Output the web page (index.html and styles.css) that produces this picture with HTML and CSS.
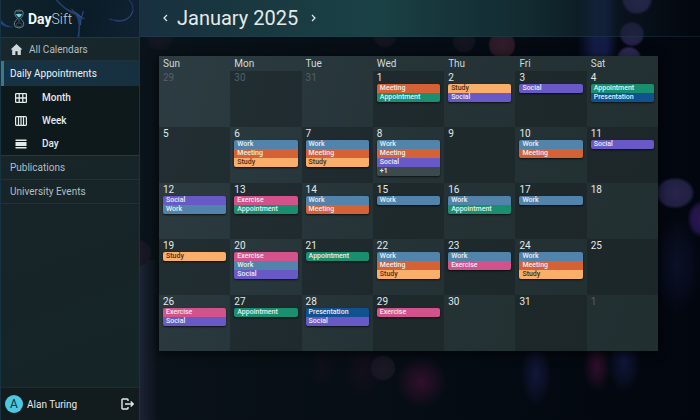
FILE: index.html
```html
<!DOCTYPE html>
<html lang="en">
<head>
<meta charset="utf-8">
<title>DaySift</title>
<link rel="stylesheet" href="styles.css">
</head>
<body>
<svg class="backdrop" viewBox="0 0 700 420" preserveAspectRatio="xMidYMid slice" aria-hidden="true">
  <defs>
    <radialGradient id="blue"><stop offset="0" stop-color="#1c2358" stop-opacity=".7"/><stop offset=".6" stop-color="#181c4c" stop-opacity=".4"/><stop offset="1" stop-color="#181c4c" stop-opacity="0"/></radialGradient>
    <radialGradient id="rose"><stop offset="0" stop-color="#3d1033" stop-opacity=".8"/><stop offset=".5" stop-color="#30102c" stop-opacity=".5"/><stop offset="1" stop-color="#28102a" stop-opacity="0"/></radialGradient>
    <radialGradient id="orb"><stop offset="0" stop-color="#332b5c"/><stop offset=".8" stop-color="#29264f"/><stop offset="1" stop-color="#29264f" stop-opacity="0"/></radialGradient>
    <radialGradient id="violet"><stop offset="0" stop-color="#2a1758"/><stop offset=".7" stop-color="#221447"/><stop offset="1" stop-color="#221447" stop-opacity="0"/></radialGradient>
    <radialGradient id="dusk"><stop offset="0" stop-color="#1c1826"/><stop offset=".85" stop-color="#171623"/><stop offset="1" stop-color="#171623" stop-opacity="0"/></radialGradient>
    <radialGradient id="ember"><stop offset="0" stop-color="#321e2a"/><stop offset=".85" stop-color="#291a26"/><stop offset="1" stop-color="#291a26" stop-opacity="0"/></radialGradient>
    <linearGradient id="beam"><stop offset="0" stop-color="#141c46" stop-opacity="0"/><stop offset=".4" stop-color="#141c46"/><stop offset=".7" stop-color="#141c46"/><stop offset="1" stop-color="#141c46" stop-opacity="0"/></linearGradient>
    <linearGradient id="edge"><stop offset="0" stop-color="#1c2233"/><stop offset="1" stop-color="#1c2233" stop-opacity="0"/></linearGradient>
  </defs>
  <rect x="578" y="0" width="40" height="57" fill="url(#beam)"/>
  <rect x="140" y="260" width="18" height="160" fill="url(#edge)"/>
  <ellipse cx="677" cy="265" rx="24" ry="50" fill="url(#blue)" opacity=".5"/>
  <ellipse cx="421" cy="382" rx="26" ry="26" fill="url(#rose)"/>
  <ellipse cx="363" cy="370" rx="20" ry="32" fill="url(#rose)" opacity=".3"/>
  <ellipse cx="322" cy="368" rx="14" ry="24" fill="url(#rose)" opacity=".2"/>
  <ellipse cx="536" cy="374" rx="15" ry="32" fill="url(#blue)" opacity=".8"/>
  <ellipse cx="597" cy="366" rx="14" ry="26" fill="url(#rose)"/>
  <ellipse cx="624" cy="362" rx="16" ry="30" fill="url(#blue)" opacity=".8"/>
  <circle cx="637" cy="-1" r="16" fill="url(#orb)"/>
  <circle cx="632" cy="34" r="13" fill="url(#orb)" opacity=".8"/>
  <circle cx="629" cy="59" r="13" fill="url(#orb)"/>
  <circle cx="502" cy="45" r="14" fill="url(#ember)"/>
  <circle cx="160" cy="37" r="14" fill="url(#dusk)" opacity=".6"/>
  <circle cx="385" cy="36" r="12" fill="url(#dusk)" opacity=".7"/>
  <circle cx="464" cy="41" r="12" fill="url(#dusk)" opacity=".7"/>
  <circle cx="383" cy="368" r="13" fill="url(#dusk)"/>
  <ellipse cx="675" cy="193" rx="20" ry="16" fill="url(#orb)" opacity=".8"/>
  <ellipse cx="702" cy="219" rx="15" ry="19" fill="url(#violet)"/>
  <circle cx="138" cy="253" r="14" fill="url(#dusk)"/>
</svg>
<div class="app">
  <aside class="sidebar">
    <div class="brand">
      <svg class="brand-art" viewBox="0 0 139 37" preserveAspectRatio="none" aria-hidden="true">
        <path d="M0 20Q5 27 13 27Q5 28 0 24Z" fill="#234384"/>
        <path d="M57 0Q64 9 75 12Q82 14 80 22L79 37H77Q80 22 75 15Q64 11 55 0Z" fill="#23416f"/>
        <path d="M71 9Q76 15 84 19M83 11Q80 19 80 25" stroke="#3b6092" stroke-width=".8" fill="none"/>
        <path d="M109 19Q127 24 132 13Q135 6 129 0" stroke="#1c3563" stroke-width="1.300" fill="none"/>
        <path d="M115 21Q129 23 133 11" stroke="#3a5585" stroke-width=".6" fill="none"/>
      </svg>
      <svg class="logo" viewBox="0 0 12 20" aria-hidden="true">
        <path d="M2.500 2Q6 0 9.500 2Q11.500 5.500 7.300 9.700Q12.500 13.500 9.800 17.700Q6 20.300 2.200 17.700Q-.5 13.500 4.700 9.700Q.5 5.500 2.500 2Z" fill="#0c1c25" stroke="#84949b" stroke-width=".8"/>
        <path d="M3 5Q6 4.500 9 5Q8.500 7.500 6 8.700Q3.500 7.500 3 5Z" fill="#68cfe0"/>
        <path d="M3.500 2.700H8.500M6 9V13" stroke="#8e9ca3" stroke-width=".5"/>
        <ellipse cx="6" cy="15.800" rx="3" ry="2" fill="none" stroke="#56666e" stroke-width=".6"/>
      </svg>
      <span class="wordmark"><b>Day</b>Sift</span>
    </div>
    <nav class="menu">
      <a class="item home" href="#all"><svg class="home-icon" viewBox="0 0 24 24" aria-hidden="true"><path fill="currentColor" d="M12 2L1 12H4V22H10V15H14V22H20V12H23Z"/></svg>All Calendars</a>
      <a class="item active" href="#daily">Daily Appointments</a>
      <div class="views">
        <a class="view" href="#month"><svg class="view-icon" viewBox="0 0 12 10" aria-hidden="true"><path fill="none" stroke="currentColor" stroke-width="1.300" d="M1.600.6H10.400Q11.400.6 11.400 1.600V8.400Q11.400 9.400 10.400 9.400H1.600Q.6 9.400.6 8.400V1.600Q.6.6 1.600.6ZM4.200.6V9.400M7.800.6V9.400M.6 5H11.400"/></svg>Month</a>
        <a class="view" href="#week"><svg class="view-icon" viewBox="0 0 12 10" aria-hidden="true"><path fill="none" stroke="currentColor" stroke-width="1.200" d="M1.600.6H10.400Q11.400.6 11.400 1.600V8.400Q11.400 9.400 10.400 9.400H1.600Q.6 9.400.6 8.400V1.600Q.6.6 1.600.6ZM3.500.6V9.400M6 .6V9.400M8.500.6V9.400"/></svg>Week</a>
        <a class="view" href="#day"><svg class="view-icon" viewBox="0 0 12 10" aria-hidden="true"><path fill="currentColor" d="M.5.500H11.500V2H.5ZM.5 3H11.500V7H.5ZM.5 8H11.500V9.500H.5Z"/></svg>Day</a>
      </div>
      <a class="item" href="#publications">Publications</a>
      <a class="item" href="#events">University Events</a>
    </nav>
    <div class="account">
      <span class="avatar">A</span>
      <span class="name">Alan Turing</span>
      <button class="logout" type="button" aria-label="Log out"><svg viewBox="0 0 13 12" aria-hidden="true"><path fill="none" stroke="currentColor" stroke-width="1.400" d="M7 3V1.700Q7 1 6.300 1H1.700Q1 1 1 1.700V10.300Q1 11 1.700 11H6.300Q7 11 7 10.300V9M4 6H12M9.700 3.500L12.200 6L9.700 8.500"/></svg></button>
    </div>
  </aside>
  <main class="main">
    <header class="topbar">
      <button class="arrow" type="button" aria-label="Previous month"><svg viewBox="0 0 5 8" aria-hidden="true"><path d="M4 1L1 4L4 7" fill="none" stroke="currentColor" stroke-width="1.200"/></svg></button>
      <h1 class="title">January 2025</h1>
      <button class="arrow" type="button" aria-label="Next month"><svg viewBox="0 0 5 8" aria-hidden="true"><path d="M1 1L4 4L1 7" fill="none" stroke="currentColor" stroke-width="1.200"/></svg></button>
    </header>
    <table class="calendar">
      <thead><tr><th>Sun</th><th>Mon</th><th>Tue</th><th>Wed</th><th>Thu</th><th>Fri</th><th>Sat</th></tr></thead>
      <tbody id="weeks"></tbody>
    </table>
  </main>
</div>
<script src="calendar.js"></script>
</body>
</html>
```
FILE: styles.css
```css
* { box-sizing: border-box; }
body {
  margin: 0;
  background: linear-gradient(90deg, #0a1319 20%, #050b13 70%, #02060e);
  color: #e4e9ea;
  font-family: Roboto, "Liberation Sans", sans-serif;
}
a { color: inherit; text-decoration: none; }
button { padding: 0; border: 0; background: none; color: inherit; }
svg { display: block; }
.backdrop { position: absolute; inset: 0; width: 100%; height: 100%; }
.app {
  position: relative;
  display: grid;
  grid-template-columns: 1fr 4fr;
  min-height: 100vh;
}

.sidebar {
  display: flex;
  flex-direction: column;
  border-left: 1px solid #163344;
  border-right: 1px solid #1a3444;
  background: linear-gradient(160deg, #18282c, #172428 50%, #142527);
}
.brand {
  position: relative;
  display: flex;
  align-items: center;
  gap: 3px;
  height: 37px;
  padding-left: 12px;
  background: linear-gradient(100deg, #10232c, #0a1c27 60%, #102232);
}
.brand-art { position: absolute; inset: 0; width: 100%; height: 100%; }
.logo { position: relative; width: 12px; height: 20px; }
.wordmark { position: relative; color: #c4d0d3; font-size: 14px; font-weight: 300; }
.wordmark b { color: #f2f8f9; font-weight: 700; }
.item {
  display: flex;
  align-items: center;
  height: 24px;
  padding-left: 9px;
  border-bottom: 1px solid #203238;
  color: #b3bfc1;
  font-size: 10px;
}
.home { gap: 6px; border-top: 1px solid #203740; }
.home-icon { width: 13px; height: 13px; color: #ced9dc; }
.active {
  height: 25px;
  padding-left: 6px;
  border-left: 3px solid #3b7888;
  border-bottom: 0;
  background: linear-gradient(90deg, #163346, #17303f);
  color: #eef5f7;
}
.views { border-bottom: 1px solid #26383d; background: #0d191b; }
.view {
  display: flex;
  align-items: center;
  gap: 15px;
  height: 23px;
  padding-left: 14px;
  font-size: 10px;
  font-weight: 500;
}
.view-icon { width: 12px; height: 10px; }
.account {
  display: flex;
  align-items: center;
  gap: 4px;
  height: 33px;
  margin-top: auto;
  padding: 0 5px 0 4px;
  border-top: 1px solid #1b2b30;
  background: #121c1e;
  font-size: 10px;
}
.avatar {
  width: 18px;
  height: 18px;
  border-radius: 50%;
  background: #4dc9df;
  color: #102d38;
  font-size: 12px;
  line-height: 18px;
  text-align: center;
}
.logout { width: 13px; height: 12px; margin-left: auto; }

.topbar {
  display: flex;
  align-items: center;
  gap: 9px;
  height: 37px;
  padding-left: 23px;
  border-bottom: 1px solid #23475c55;
  background: linear-gradient(90deg, #183040, #19383f 20%, #1a4246 42%, #163439 56%, #122a30 70%, #10202b88 84%, transparent);
}
.arrow { width: 5px; height: 8px; }
.title { margin: 0 4px 0 0; font-size: 20px; font-weight: 400; line-height: 24px; }
.calendar {
  width: calc(100% - 61px);
  margin: 19px 42px 0 19px;
  border-collapse: collapse;
  table-layout: fixed;
  background: linear-gradient(110deg, #2c3c42, #253336 50%, #222f31);
  box-shadow: 0 2px 10px #000a;
}
.calendar th {
  height: 15px;
  padding: 0 4px;
  color: #d0dadb;
  font-size: 10px;
  font-weight: 400;
  line-height: 15px;
  text-align: left;
}
.calendar td { height: 56px; padding: 0 4px; vertical-align: top; }
.calendar tr:nth-child(odd) td:nth-child(even),
.calendar tr:nth-child(even) td:nth-child(odd) { background: #141c1d66; }
.date { display: block; color: #e2e9ea; font-size: 10px; line-height: 13px; }
.outside { color: #526166; }
.events {
  margin: 0;
  padding: 0;
  border-radius: 2px;
  box-shadow: 0 1px 2px #000a;
  list-style: none;
  overflow: hidden;
}
.event {
  height: 9px;
  padding-left: 3px;
  color: #e9eff2;
  font-size: 7px;
  font-weight: 500;
  line-height: 9px;
  white-space: nowrap;
}
.work { background: #5283aa; }
.meeting { background: #d56236; }
.study { background: #f9ae6a; color: #482f22; }
.social { background: #6859c6; }
.appointment { background: #198f70; }
.presentation { background: #10518f; }
.exercise { background: #d2528c; }
.more { background: #3d4a4d; }
```
FILE: calendar.js
```javascript
const events = {
  1: ["Meeting", "Appointment"],
  2: ["Study", "Social"],
  3: ["Social"],
  4: ["Appointment", "Presentation"],
  6: ["Work", "Meeting", "Study"],
  7: ["Work", "Meeting", "Study"],
  8: ["Work", "Meeting", "Social", "+1"],
  10: ["Work", "Meeting"],
  11: ["Social"],
  12: ["Social", "Work"],
  13: ["Exercise", "Appointment"],
  14: ["Work", "Meeting"],
  15: ["Work"],
  16: ["Work", "Appointment"],
  17: ["Work"],
  19: ["Study"],
  20: ["Exercise", "Work", "Social"],
  21: ["Appointment"],
  22: ["Work", "Meeting", "Study"],
  23: ["Work", "Exercise"],
  24: ["Work", "Meeting", "Study"],
  26: ["Exercise", "Social"],
  27: ["Appointment"],
  28: ["Presentation", "Social"],
  29: ["Exercise"]
};

const body = document.getElementById("weeks");
for (let week = 0; week < 5; week++) {
  const row = body.insertRow();
  for (let weekday = 0; weekday < 7; weekday++) {
    const day = new Date(2025, 0, week * 7 + weekday - 2);
    const inside = day.getMonth() === 0;
    const cell = row.insertCell();
    const date = document.createElement("span");
    date.className = inside ? "date" : "date outside";
    date.textContent = day.getDate();
    cell.append(date);
    const names = inside ? events[day.getDate()] : null;
    if (!names) continue;
    const list = document.createElement("ul");
    list.className = "events";
    for (const name of names) {
      const entry = document.createElement("li");
      entry.className = "event " + (name.startsWith("+") ? "more" : name.toLowerCase());
      entry.textContent = name;
      list.append(entry);
    }
    cell.append(list);
  }
}
```
